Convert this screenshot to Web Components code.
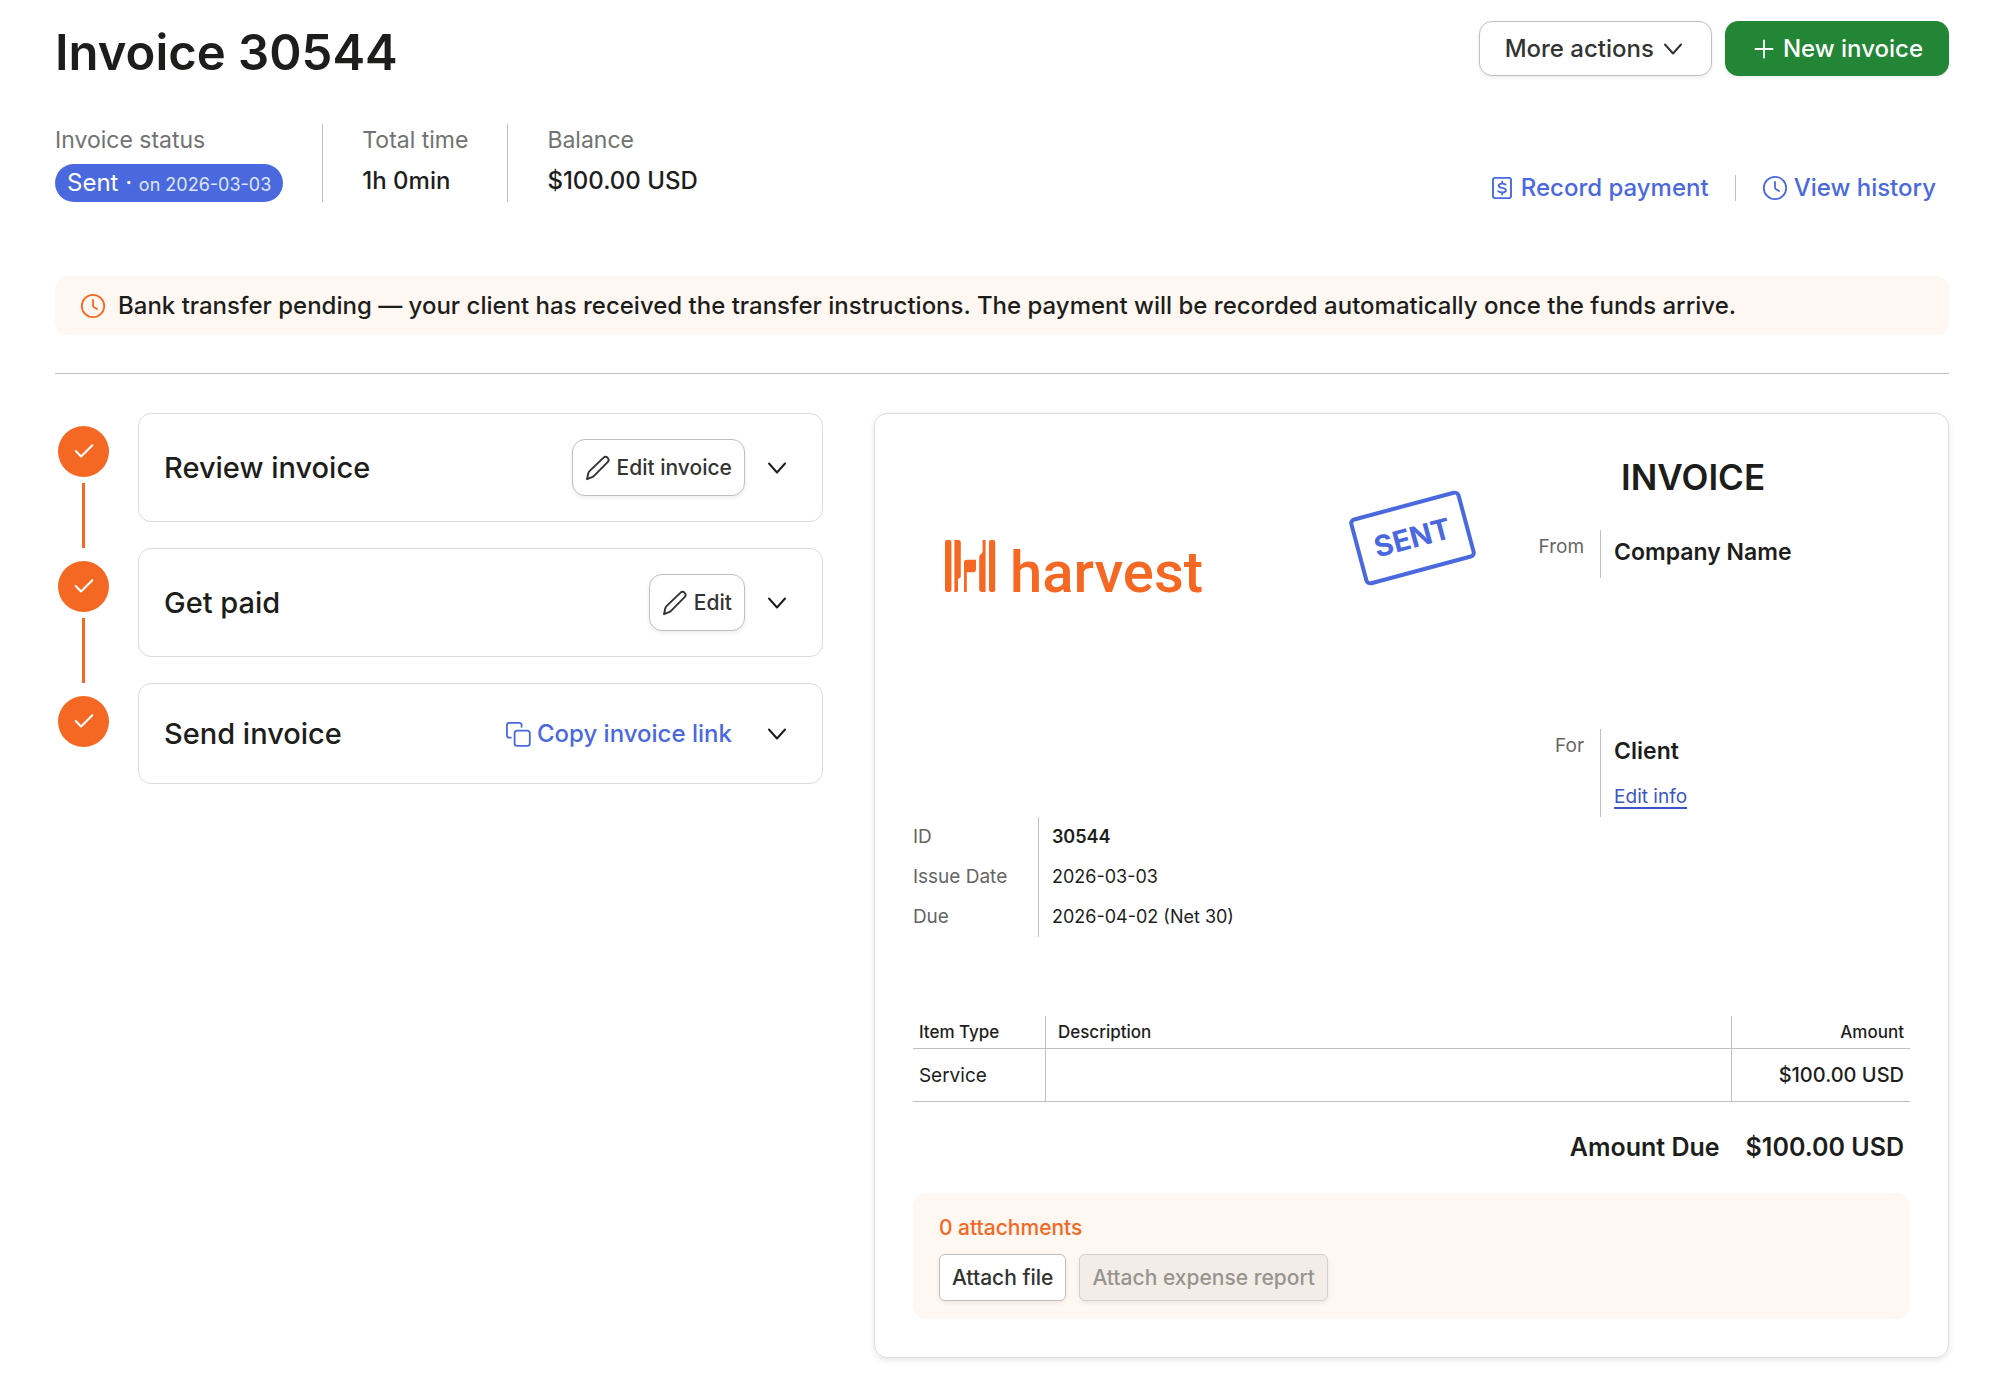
<!DOCTYPE html>
<html lang="en">
<head>
<meta charset="utf-8">
<title>Invoice 30544</title>
<style>
  html { background: #fff; }
  body {
    margin: 0;
    font-family: Inter, "Liberation Sans", sans-serif;
    font-size: 24px;
    color: #1d1e1c;
    --blue: #4b69de;
    --orange: #f56823;
    --green: #228636;
    --cream: #fff7f1;
    --line: #bfbfbf;
    --muted: #727272;
  }
</style>
</head>
<body>
<invoice-page></invoice-page>

<script>
const define = (name, html) => {
  const template = document.createElement('template');
  template.innerHTML = html;
  customElements.define(name, class extends HTMLElement {
    constructor() {
      super();
      this.attachShadow({ mode: 'open' }).append(template.content.cloneNode(true));
    }
  });
};

/* Icons, all on a 26 x 26 grid */
const ICONS = {
  chevron: '<path d="M5 8.5 L13 17.5 L21 8.5" stroke-width="2"/>',
  plus: '<path d="M13 4.5 V21.5 M4.5 13 H21.5" stroke-width="1.8"/>',
  clock: '<circle cx="13" cy="13" r="11.2" stroke-width="1.8"/><path d="M13 6.8 V12.4 Q13 13.6 14.1 14.3 L17 16" stroke-width="1.8"/>',
  dollar: '<rect x="4" y="2.9" width="18" height="20.2" rx="2" stroke-width="1.9"/><path d="M16.6 9.6 C15.6 8.8 14.4 8.6 13 8.6 C11 8.6 9.8 9.4 9.8 10.7 C9.8 13.8 16.9 12 16.9 15.2 C16.9 16.7 15.3 17.4 13.3 17.4 C11.8 17.4 10.4 17.1 9.3 16.2 M13.2 6.6 V8.6 M13.2 17.4 V19.6" stroke-width="1.9"/>',
  pencil: '<path d="M2 24.2 L3.3 18.2 Q3.6 17 4.5 16.1 L18.3 2.9 C19.6 1.6 21.3 1.6 22.6 2.8 C23.9 4.1 23.9 5.8 22.6 7.1 L9 20.9 Q8.2 21.8 7 22.2 Z" stroke-width="1.9"/>',
  copy: '<rect x="9.6" y="9.6" width="15.2" height="15.2" rx="2.6" stroke-width="1.8"/><path d="M5.9 16.6 H4.2 Q1.9 16.6 1.9 14.3 V4.1 Q1.9 1.8 4.2 1.8 H14.3 Q16.6 1.8 16.6 4.1 V5.8" stroke-width="1.8"/>',
  check: '<path d="M4 12 L9.8 17.8 L22 5.6" stroke-width="2.2"/>'
};
customElements.define('ui-icon', class extends HTMLElement {
  constructor() { super(); this.attachShadow({ mode: 'open' }); }
  connectedCallback() {
    this.shadowRoot.innerHTML = `
      <style>
        :host { display: block; flex: none; width: 26px; height: 26px; }
        svg { display: block; width: 100%; height: 100%; }
      </style>
      <svg viewBox="0 0 26 26" fill="none" stroke="currentColor" stroke-linecap="round" stroke-linejoin="round" aria-hidden="true">${ICONS[this.getAttribute('name')]}</svg>`;
  }
});

/* Button: kinds are outline (default), primary, edit, small and bare */
customElements.define('ui-button', class extends HTMLElement {
  constructor() { super(); this.attachShadow({ mode: 'open' }); }
  connectedCallback() {
    const label = this.getAttribute('label');
    this.shadowRoot.innerHTML = `
      <style>
        :host { display: block; flex: none; }
        button {
          display: flex; align-items: center; justify-content: center; gap: 6px;
          box-sizing: border-box; height: 55px; margin: 0; padding: 0 25px;
          border: 1px solid var(--line); border-radius: 13px;
          background: #fff; color: #333432;
          font: 500 24px/30px Inter, "Liberation Sans", sans-serif;
          box-shadow: 0 2px 4px rgba(0, 0, 0, .07); cursor: pointer; white-space: nowrap;
        }
        :host([kind=primary]) button { background: var(--green); border-color: var(--green); color: #fff; }
        :host([kind=edit]) button { height: 57px; padding: 0 12px; font-size: 21px; }
        :host([kind=small]) button { height: 47px; padding: 0 12px; font-size: 21px; border-radius: 6px; }
        :host([kind=bare]) button { width: 40px; height: 40px; padding: 0; border: 0; background: none; box-shadow: none; color: #1d1e1c; }
        button:disabled { background: #f3ece7; color: #97948e; border-color: #d2d1cf; cursor: default; }
      </style>
      <button type="button"${label ? ` aria-label="${label}"` : ''}${this.hasAttribute('disabled') ? ' disabled' : ''}><slot></slot></button>`;
  }
});

customElements.define('action-link', class extends HTMLElement {
  constructor() { super(); this.attachShadow({ mode: 'open' }); }
  connectedCallback() {
    this.shadowRoot.innerHTML = `
      <style>
        :host { display: block; flex: none; }
        a { display: flex; align-items: center; gap: 6px; color: var(--blue); font-weight: 500; line-height: 28px; text-decoration: none; white-space: nowrap; }
      </style>
      <a href="#"><ui-icon name="${this.getAttribute('icon')}"></ui-icon><slot></slot></a>`;
  }
});

define('page-header', `
  <style>
    :host { display: flex; justify-content: space-between; align-items: flex-start; }
    h1 { margin: 0; font-size: 49px; line-height: 63px; font-weight: 600; }
    .buttons { display: flex; gap: 13px; }
  </style>
  <h1><slot></slot></h1>
  <div class="buttons"><slot name="buttons"></slot></div>`);

define('status-bar', `
  <style>
    :host { display: flex; justify-content: space-between; align-items: flex-end; margin-top: 40px; }
    .stats { display: flex; }
    .links { display: flex; align-items: center; gap: 26px; padding-right: 13px; }
    .rule { width: 1px; height: 26px; background: var(--line); }
  </style>
  <div class="stats"><slot></slot></div>
  <div class="links">
    <action-link icon="dollar">Record payment</action-link>
    <span class="rule"></span>
    <action-link icon="clock">View history</action-link>
  </div>`);

define('stat-item', `
  <style>
    :host { display: flex; flex-direction: column; align-items: flex-start; gap: 7px; min-height: 78px; padding: 0 39px; border-left: 1px solid var(--line); }
    :host(:first-child) { padding-left: 0; border-left: 0; }
    .label { font-size: 23px; line-height: 33px; color: var(--muted); }
    .value { font-weight: 500; line-height: 33px; }
  </style>
  <span class="label"><slot name="label"></slot></span>
  <span class="value"><slot></slot></span>`);

define('status-pill', `
  <style>
    :host { display: block; padding: 0 12px; border-radius: 19px; background: var(--blue); color: #fff; line-height: 38px; white-space: nowrap; font-weight: 400; font-size: 24px; }
    .when { font-size: 18px; line-height: 20px; color: #dfe5fb; }
  </style>
  <slot></slot> · <span class="when"><slot name="when"></slot></span>`);

define('notice-banner', `
  <style>
    :host { display: flex; align-items: center; gap: 12px; box-sizing: border-box; min-height: 59px; margin-top: 74px; padding: 0 25px; border-radius: 13px; background: var(--cream); font-weight: 500; line-height: 30px; }
    ui-icon { color: var(--orange); }
  </style>
  <ui-icon name="clock"></ui-icon>
  <span><slot></slot></span>`);

define('invoice-step', `
  <style>
    :host { display: grid; grid-template-columns: 57px minmax(0, 1fr); column-gap: 26px; }
    .track { display: flex; flex-direction: column; align-items: center; gap: 6px; padding-top: 13px; }
    .dot { display: flex; align-items: center; justify-content: center; width: 51px; height: 51px; border-radius: 50%; background: var(--orange); color: #fff; }
    .dot ui-icon { width: 24px; height: 24px; }
    .line { flex: 1; width: 3px; background: var(--orange); }
    :host(:last-child) .line { display: none; }
    .card { display: flex; align-items: center; gap: 12px; box-sizing: border-box; min-height: 101px; margin-bottom: 26px; padding: 25px; border: 1px solid #dcdcdc; border-radius: 13px; }
    h2 { flex: 1; margin: 0; font-size: 29px; line-height: 36px; font-weight: 500; }
  </style>
  <div class="track">
    <span class="dot"><ui-icon name="check"></ui-icon></span>
    <span class="line"></span>
  </div>
  <div class="card">
    <h2><slot></slot></h2>
    <slot name="action"></slot>
    <ui-button kind="bare" label="Expand"><ui-icon name="chevron"></ui-icon></ui-button>
  </div>`);

define('company-logo', `
  <style>
    :host { display: flex; align-items: baseline; gap: 14px; color: var(--orange); }
    svg { display: block; flex: none; width: 51px; height: 52px; }
    span { font: 500 58px/52px Roboto, sans-serif; }
  </style>
  <svg viewBox="0 0 51 52" fill="currentColor" aria-hidden="true">
    <rect x="0" y="0" width="6.4" height="52" rx="2"/>
    <path d="M9.4 0 H13.4 Q15.8 0 15.8 2.4 V36.5 Q15.8 38.4 13 38.8 V50.5 Q13 52 11.5 52 H9.4 Z"/>
    <path d="M19 22.2 Q19 19.8 21.4 19.8 H31 V29.8 Q31 32.2 28.6 32.2 H21.8 V52 H19 Z"/>
    <path d="M37.6 0 H40.6 V52 H36.6 Q34.2 52 34.2 49.6 V17.4 Q34.2 15 36 14 Q37.6 13.2 37.6 11 Z"/>
    <rect x="44" y="0" width="6.2" height="52" rx="2"/>
  </svg>
  <span><slot></slot></span>`);

define('status-stamp', `
  <style>
    :host { display: flex; align-items: center; justify-content: center; box-sizing: border-box; width: 115px; height: 70px; border: 4px solid var(--blue); border-radius: 6px; color: var(--blue); font-size: 29px; line-height: 36px; font-weight: 700; transform: rotate(-15deg); }
  </style>
  <slot></slot>`);

define('party-block', `
  <style>
    :host { display: grid; grid-template-columns: 53px minmax(0, 1fr); column-gap: 16px; }
    .label { font-size: 19px; line-height: 34px; text-align: right; color: #666; }
    .body { padding: 0 0 var(--tail, 0) 13px; border-left: 1px solid var(--line); }
    .name { font-size: 23px; font-weight: 600; line-height: 44px; }
    ::slotted(a) { display: block; }
  </style>
  <span class="label"><slot name="label"></slot></span>
  <div class="body"><div class="name"><slot></slot></div><slot name="extra"></slot></div>`);

define('invoice-facts', `
  <style>
    dl { display: grid; grid-template-columns: 125px minmax(0, 1fr); margin: 0; line-height: 40px; font-size: 18px; }
    :host { display: block; }
    dt { font-size: 19px; color: #666; }
    dd { margin: 0; padding-left: 13px; border-left: 1px solid var(--line); }
    .strong { font-weight: 600; }
  </style>
  <dl>
    <dt>ID</dt><dd class="strong">30544</dd>
    <dt>Issue Date</dt><dd>2026-03-03</dd>
    <dt>Due</dt><dd>2026-04-02 (Net 30)</dd>
  </dl>`);

define('line-items', `
  <style>
    :host { display: block; margin-top: 79px; }
    table { width: 100%; border-collapse: separate; border-spacing: 0; table-layout: fixed; }
    .type { width: 133px; }
    .amount { width: 179px; }
    th, td { box-sizing: border-box; padding: 0 6px; text-align: left; border-bottom: 1px solid var(--line); }
    th { height: 33px; font-size: 17px; font-weight: 500; }
    td { height: 53px; font-size: 19px; }
    th + th, td + td { padding-left: 12px; }
    th:first-child, td:first-child { border-right: 1px solid var(--line); }
    th:last-child, td:last-child { text-align: right; border-left: 1px solid var(--line); }
    td:last-child { font-size: 20px; font-weight: 500; }
    .total { display: flex; justify-content: flex-end; gap: 26px; padding: 30px 6px 31px; font-size: 25px; font-weight: 600; line-height: 30px; }
  </style>
  <table>
    <colgroup><col class="type"><col><col class="amount"></colgroup>
    <thead><tr><th scope="col">Item Type</th><th scope="col">Description</th><th scope="col">Amount</th></tr></thead>
    <tbody><tr><td>Service</td><td></td><td>$100.00 USD</td></tr></tbody>
  </table>
  <div class="total"><span>Amount Due</span><span>$100.00 USD</span></div>`);

define('attachment-box', `
  <style>
    :host { display: block; padding: 20px 26px 18px; border-radius: 13px; background: var(--cream); }
    .count { font-size: 21px; font-weight: 500; line-height: 30px; color: var(--orange); }
    .row { display: flex; gap: 13px; margin-top: 11px; }
  </style>
  <div class="count">0 attachments</div>
  <div class="row">
    <ui-button kind="small">Attach file</ui-button>
    <ui-button kind="small" disabled>Attach expense report</ui-button>
  </div>`);

define('invoice-paper', `
  <style>
    :host { display: block; padding: 38px; border: 1px solid #dcdcdc; border-radius: 13px; box-shadow: 0 2px 6px rgba(0, 0, 0, .1); }
    .top { display: flex; align-items: flex-start; }
    .brand { flex: 1; display: flex; justify-content: space-between; align-items: flex-start; }
    company-logo { margin: 88px 0 0 32px; }
    status-stamp { margin: 51px 61px 0 0; }
    .parties { flex: 0 0 38%; }
    h2 { margin: 0 0 27px; padding-left: 90px; font-size: 35px; font-weight: 600; line-height: 51px; }
    .from { --tail: 4px; margin-bottom: 151px; }
    a { padding-top: 4px; font-size: 19px; line-height: 40px; color: #3b56c4; text-decoration: underline; text-decoration-thickness: 2px; text-underline-offset: 4px; }
  </style>
  <div class="top">
    <div class="brand">
      <company-logo>harvest</company-logo>
      <status-stamp>SENT</status-stamp>
    </div>
    <div class="parties">
      <h2>INVOICE</h2>
      <party-block class="from"><span slot="label">From</span>Company Name</party-block>
      <party-block><span slot="label">For</span>Client<a slot="extra" href="#">Edit info</a></party-block>
    </div>
  </div>
  <invoice-facts></invoice-facts>
  <line-items></line-items>
  <attachment-box></attachment-box>`);

define('invoice-page', `
  <style>
    :host { display: block; padding: 21px 57px 37px 55px; }
    hr { height: 1px; margin: 38px 0 39px; border: 0; background: var(--line); }
    .columns { display: grid; grid-template-columns: minmax(0, 5fr) minmax(0, 7fr); column-gap: 51px; align-items: start; }
    action-link[slot] { padding: 0 13px; }
  </style>
  <page-header>
    Invoice 30544
    <ui-button slot="buttons">More actions <ui-icon name="chevron"></ui-icon></ui-button>
    <ui-button slot="buttons" kind="primary"><ui-icon name="plus"></ui-icon>New invoice</ui-button>
  </page-header>
  <status-bar>
    <stat-item><span slot="label">Invoice status</span><status-pill>Sent<span slot="when">on 2026-03-03</span></status-pill></stat-item>
    <stat-item><span slot="label">Total time</span>1h 0min</stat-item>
    <stat-item><span slot="label">Balance</span>$100.00 USD</stat-item>
  </status-bar>
  <notice-banner>Bank transfer pending — your client has received the transfer instructions. The payment will be recorded automatically once the funds arrive.</notice-banner>
  <hr>
  <div class="columns">
    <section>
      <invoice-step>Review invoice<ui-button slot="action" kind="edit"><ui-icon name="pencil"></ui-icon>Edit invoice</ui-button></invoice-step>
      <invoice-step>Get paid<ui-button slot="action" kind="edit"><ui-icon name="pencil"></ui-icon>Edit</ui-button></invoice-step>
      <invoice-step>Send invoice<action-link slot="action" icon="copy">Copy invoice link</action-link></invoice-step>
    </section>
    <invoice-paper></invoice-paper>
  </div>`);
</script>
</body>
</html>
